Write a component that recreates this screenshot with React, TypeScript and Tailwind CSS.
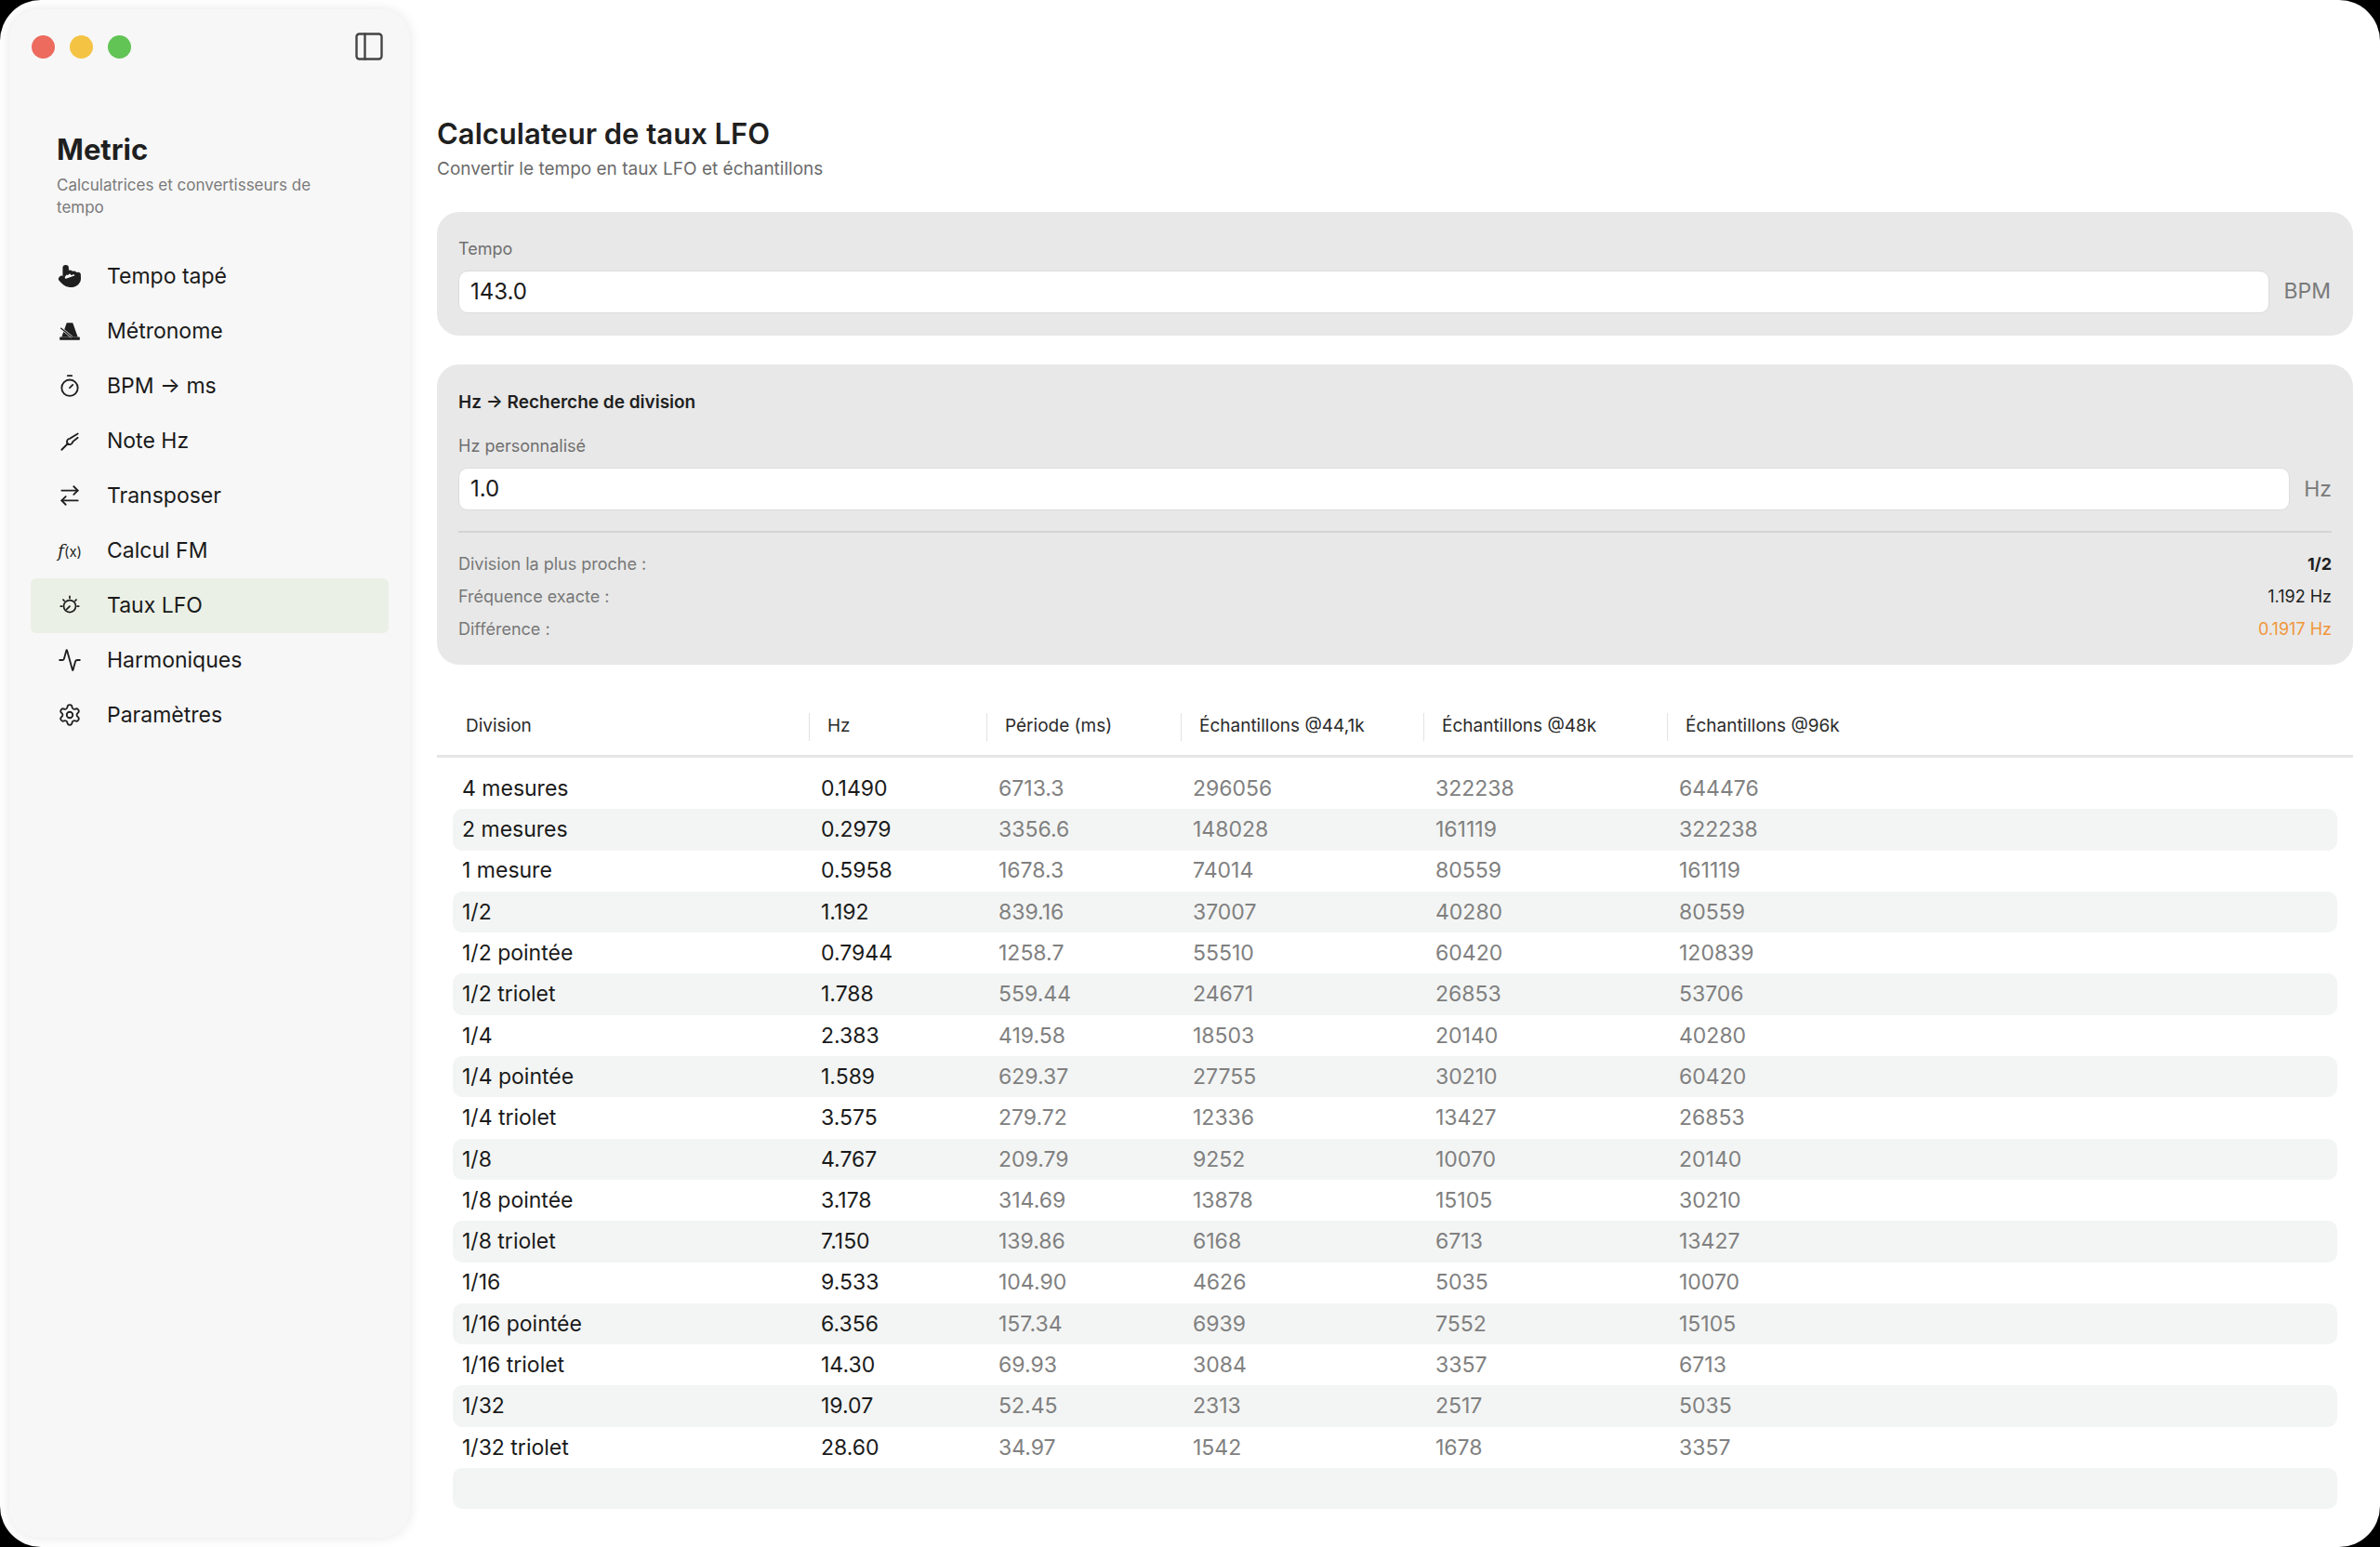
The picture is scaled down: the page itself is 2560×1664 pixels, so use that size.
import React from "react";
import { Pointer, Timer, ArrowRightLeft, Activity, Settings, PanelLeft } from "lucide-react";

const rows: [string, string, string, string, string, string][] = [
  ["4 mesures", "0.1490", "6713.3", "296056", "322238", "644476"],
  ["2 mesures", "0.2979", "3356.6", "148028", "161119", "322238"],
  ["1 mesure", "0.5958", "1678.3", "74014", "80559", "161119"],
  ["1/2", "1.192", "839.16", "37007", "40280", "80559"],
  ["1/2 pointée", "0.7944", "1258.7", "55510", "60420", "120839"],
  ["1/2 triolet", "1.788", "559.44", "24671", "26853", "53706"],
  ["1/4", "2.383", "419.58", "18503", "20140", "40280"],
  ["1/4 pointée", "1.589", "629.37", "27755", "30210", "60420"],
  ["1/4 triolet", "3.575", "279.72", "12336", "13427", "26853"],
  ["1/8", "4.767", "209.79", "9252", "10070", "20140"],
  ["1/8 pointée", "3.178", "314.69", "13878", "15105", "30210"],
  ["1/8 triolet", "7.150", "139.86", "6168", "6713", "13427"],
  ["1/16", "9.533", "104.90", "4626", "5035", "10070"],
  ["1/16 pointée", "6.356", "157.34", "6939", "7552", "15105"],
  ["1/16 triolet", "14.30", "69.93", "3084", "3357", "6713"],
  ["1/32", "19.07", "52.45", "2313", "2517", "5035"],
  ["1/32 triolet", "28.60", "34.97", "1542", "1678", "3357"],
];

const Metronome = () => (
  <svg width="26" height="26" viewBox="0 0 24 24" fill="#1f1f1f">
    <path d="M9 4h6l5 14H4z" />
    <rect x="2" y="18" width="20" height="3" rx="0.5" />
    <path d="M3 9l11 9" stroke="#f7f7f7" strokeWidth="2.2" />
    <path d="M3 9l11 9" stroke="#1f1f1f" strokeWidth="1.2" />
  </svg>
);
const Fork = () => (
  <svg width="26" height="26" viewBox="0 0 24 24" fill="none" stroke="#1f1f1f" strokeWidth="1.7" strokeLinecap="round">
    <path d="M4 21l6-6" />
    <path d="M10 15c-2-2 0-5 2-5l8-5" />
    <path d="M10 15c2 2 5 0 5-2l5-4" />
  </svg>
);
const Lfo = () => (
  <svg width="26" height="26" viewBox="0 0 24 24" fill="none" stroke="#1f1f1f" strokeWidth="1.6" strokeLinecap="round">
    <circle cx="12" cy="13" r="6" />
    <path d="M12 13l-3 3" />
    <path d="M12 3v2M3 13h1.5M19.5 13H21M5.5 6.5l1 1M18.5 6.5l-1 1" />
  </svg>
);

const nav = [
  { label: "Tempo tapé", icon: <Pointer size={26} strokeWidth={2} fill="#1f1f1f" color="#1f1f1f" /> },
  { label: "Métronome", icon: <Metronome /> },
  { label: "BPM → ms", icon: <Timer size={26} strokeWidth={1.7} color="#1f1f1f" /> },
  { label: "Note Hz", icon: <Fork /> },
  { label: "Transposer", icon: <ArrowRightLeft size={26} strokeWidth={1.7} color="#1f1f1f" /> },
  { label: "Calcul FM", icon: <span className="text-[19px] italic text-[#1f1f1f]" style={{ fontFamily: "'DejaVu Serif', serif" }}>f<span className="not-italic text-[15px]" style={{ fontFamily: "Inter, sans-serif" }}>(x)</span></span> },
  { label: "Taux LFO", icon: <Lfo />, active: true },
  { label: "Harmoniques", icon: <Activity size={26} strokeWidth={1.7} color="#1f1f1f" /> },
  { label: "Paramètres", icon: <Settings size={26} strokeWidth={1.7} color="#1f1f1f" /> },
];

const cols = ["w-[400px]", "w-[191px]", "w-[209px]", "w-[261px]", "w-[262px]", "w-[262px]"];

export default function App() {
  return (
    <div className="h-[1664px] w-[2560px] bg-black" style={{ fontFamily: "Inter, 'Helvetica Neue', Arial, sans-serif" }}>
      <div className="h-full w-full rounded-[44px] bg-white flex overflow-hidden">
        <aside className="m-[10px] w-[431px] shrink-0 rounded-[32px] bg-[#f7f7f7] shadow-[0_0_14px_rgba(0,0,0,0.10)] flex flec-col flex-col">
          <div className="flex items-center justify-between pl-[24px] pr-[26px] pt-[22px]">
            <div className="flex gap-[16px]">
              <span className="w-[25px] h-[25px] rounded-full bg-[#ed6a5e]" />
              <span className="w-[25px] h-[25px] rounded-full bg-[#f5c343]" />
              <span className="w-[25px] h-[25px] rounded-full bg-[#61c454]" />
            </div>
            <PanelLeft size={36} strokeWidth={1.6} color="#444" />
          </div>
          <div className="pl-[51px] pt-[74px]">
            <div className="text-[31px] font-bold text-[#1f1f1f] leading-tight">Metric</div>
            <div className="mt-[6px] text-[17px] text-[#7a7a7a] leading-[24px] w-[275px]">Calculatrices et convertisseurs de tempo</div>
          </div>
          <nav className="mt-[33px] px-[23px] flex flex-col">
            {nav.map((n) => (
              <div key={n.label} className={`h-[59px] flex items-center rounded-[6px] ${n.active ? "bg-[#ebf0e6]" : ""}`}>
                <span className="w-[82px] flex justify-center pl-[2px]">{n.icon}</span>
                <span className="text-[23px] text-[#1a1a1a]">{n.label}</span>
              </div>
            ))}
          </nav>
        </aside>

        <main className="flex-1 pl-[19px] pr-[29px] pt-[124px]">
          <h1 className="text-[31px] font-semibold text-[#1f1f1f] leading-[40px]">Calculateur de taux LFO</h1>
          <p className="text-[19px] text-[#6b6b6b] mt-[4px]">Convertir le tempo en taux LFO et échantillons</p>

          <section className="mt-[31px] rounded-[24px] bg-[#e8e8e8] px-[23px] pt-[26px] pb-[24px]">
            <div className="text-[18px] text-[#6f6f6f]">Tempo</div>
            <div className="mt-[10px] flex items-center gap-[15px]">
              <div className="flex-1 h-[46px] rounded-[10px] bg-white border border-[#dcdcdc] flex items-center px-[12px] text-[24px] text-[#1a1a1a]">143.0</div>
              <span className="text-[23px] text-[#7a7a7a] pr-[1px]">BPM</span>
            </div>
          </section>

          <section className="mt-[31px] rounded-[24px] bg-[#e8e8e8] px-[23px] pt-[27px] pb-[26px]">
            <div className="text-[19px] font-semibold text-[#1f1f1f]">Hz → Recherche de division</div>
            <div className="mt-[19px] text-[18px] text-[#6f6f6f]">Hz personnalisé</div>
            <div className="mt-[10px] flex items-center gap-[15px]">
              <div className="flex-1 h-[46px] rounded-[10px] bg-white border border-[#dcdcdc] flex items-center px-[12px] text-[24px] text-[#1a1a1a]">1.0</div>
              <span className="text-[23px] text-[#7a7a7a]">Hz</span>
            </div>
            <div className="mt-[22px] border-t-2 border-[#d4d4d4]" />
            <div className="mt-[22px] flex flex-col gap-[11px] text-[18px]">
              <div className="flex justify-between leading-[24px]"><span className="text-[#777]">Division la plus proche :</span><span className="font-bold text-[#1f1f1f]">1/2</span></div>
              <div className="flex justify-between leading-[24px]"><span className="text-[#777]">Fréquence exacte :</span><span className="text-[#1f1f1f]">1.192 Hz</span></div>
              <div className="flex justify-between leading-[24px]"><span className="text-[#777]">Différence :</span><span className="text-[#f0963a]">0.1917 Hz</span></div>
            </div>
          </section>

          <section className="mt-[36px]">
            <div className="flex h-[64px] items-center border-b-[3px] border-[#e6e6e6] text-[19px] text-[#2a2a2a]">
              {["Division", "Hz", "Période (ms)", "Échantillons @44,1k", "Échantillons @48k", "Échantillons @96k"].map((h, i) => (
                <div key={h} className={`${cols[i]} h-[30px] flex items-center ${i === 0 ? "pl-[31px]" : "pl-[19px] border-l border-[#e3e3e3]"}`}>{h}</div>
              ))}
            </div>
            <div className="mt-[11px] pl-[17px] pr-[17px]">
              {[...rows, null].map((r, idx) => (
                <div key={idx} className={`h-[44.3px] flex items-center rounded-[10px] text-[23px] ${idx % 2 === 1 ? "bg-[#f3f5f4]" : ""}`}>
                  {r && r.map((c, i) => (
                    <div key={i} className={`${i === 0 ? "w-[393px] pl-[10px]" : cols[i] + " pl-[3px]"} ${i < 2 ? "text-[#1a1a1a]" : "text-[#808080]"}`}>{c}</div>
                  ))}
                </div>
              ))}
            </div>
          </section>
        </main>
      </div>
    </div>
  );
}
